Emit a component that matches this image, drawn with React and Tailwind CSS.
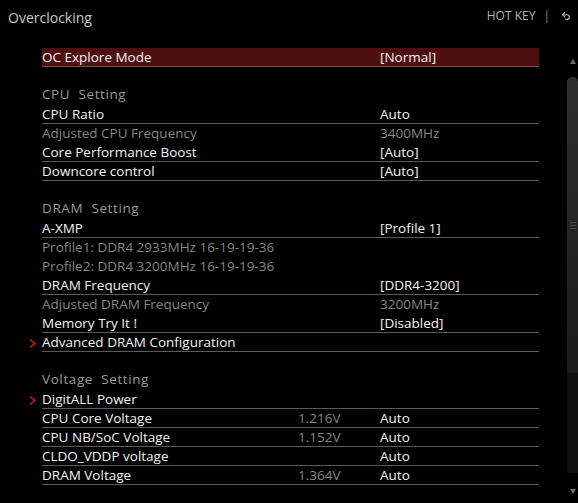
import React from "react"

const rows = [
  { label: "OC Explore Mode", value: "[Normal]", line: true, active: true },
  { blank: true },
  { header: "CPU  Setting" },
  { label: "CPU Ratio", value: "Auto", line: true },
  { label: "Adjusted CPU Frequency", value: "3400MHz", dim: true },
  { label: "Core Performance Boost", value: "[Auto]", line: true },
  { label: "Downcore control", value: "[Auto]", line: true },
  { blank: true },
  { header: "DRAM  Setting" },
  { label: "A-XMP", value: "[Profile 1]", line: true },
  { label: "Profile1: DDR4 2933MHz 16-19-19-36", dim: true },
  { label: "Profile2: DDR4 3200MHz 16-19-19-36", dim: true },
  { label: "DRAM Frequency", value: "[DDR4-3200]", line: true },
  { label: "Adjusted DRAM Frequency", value: "3200MHz", dim: true },
  { label: "Memory Try It !", value: "[Disabled]", line: true },
  { label: "Advanced DRAM Configuration", line: true, sub: true },
  { blank: true },
  { header: "Voltage  Setting" },
  { label: "DigitALL Power", line: true, sub: true },
  { label: "CPU Core Voltage", now: "1.216V", value: "Auto", line: true },
  { label: "CPU NB/SoC Voltage", now: "1.152V", value: "Auto", line: true },
  { label: "CLDO_VDDP voltage", value: "Auto", line: true },
  { label: "DRAM Voltage", now: "1.364V", value: "Auto", line: true }
]

function Chevron() {
  return (
    <svg width="8" height="11" viewBox="0 0 8 11">
      <polyline points="1,1.5 6,5.5 1,9.5" fill="none" stroke="#e01c1c" strokeWidth="1.4" />
    </svg>
  )
}

function Row({ r }) {
  if (r.blank) return <div className="h-[19px]" />

  if (r.header)
    return (
      <div className="h-[19px] flex items-center pl-[18px] pb-[1px] text-[#9a9a9a] tracking-[0.6px] whitespace-pre">
        {r.header}
      </div>
    )

  return (
    <div className="h-[19px] flex">
      <div className="w-[18px] flex items-center pl-[5px] pt-[1px]">
        {r.sub && <Chevron />}
      </div>
      <div
        className={`flex-1 flex items-center pt-[2px] border-b ${
          r.line ? "border-[#5a5a5a]" : "border-transparent"
        } ${r.active ? "bg-[#4d0f10]" : ""}`}
      >
        <div className={`w-[256px] whitespace-nowrap ${r.dim ? "text-[#858585]" : "text-[#f2f2f2]"}`}>
          {r.label}
        </div>
        <div className="w-[82px] text-[#858585]">{r.now}</div>
        <div className={r.dim ? "text-[#858585]" : "text-[#f2f2f2]"}>{r.value}</div>
      </div>
    </div>
  )
}

export default function App() {
  return (
    <div
      className="w-[578px] h-[503px] bg-black overflow-hidden text-[13.5px] leading-none"
      style={{ fontFamily: '"Open Sans", sans-serif' }}
    >
      {/* Top bar */}
      <div className="h-[48px] flex items-start justify-between">
        <div className="pl-[8px] pt-[11px] text-[14px] text-[#c8c8c8]">Overclocking</div>
        <div className="flex items-center pt-[10px] pr-[7px] text-[12px] text-[#b4b4b4]">
          <span>HOT KEY</span>
          <span className="ml-[8px] text-[#8a8a8a]">|</span>
          <svg className="ml-[11px]" width="10" height="10" viewBox="0 0 24 24" fill="none" stroke="#b4b4b4" strokeWidth="2.8" strokeLinecap="round" strokeLinejoin="round">
            <path d="M9 14 4 9l5-5" />
            <path d="M4 9h10.5a5.5 5.5 0 0 1 5.5 5.5a5.5 5.5 0 0 1-5.5 5.5H11" />
          </svg>
        </div>
      </div>

      <div className="flex">
        {/* Settings list */}
        <div className="pl-[24px] w-[539px]">
          {rows.map((r, i) => (
            <Row key={i} r={r} />
          ))}
        </div>

        <div className="flex-1" />

        {/* Scrollbar */}
        <div className="w-[11px] flex flex-col items-center">
          <div className="mt-[11px] w-0 h-0 border-l-[3px] border-r-[3px] border-b-[5px] border-l-transparent border-r-transparent border-b-[#6a6a6a]" />
          <div className="mt-[13px] w-[11px] h-[296px] rounded-t-[5px] bg-gradient-to-b from-[#2e2e2e] to-[#1b1b1b] flex flex-col items-center justify-center gap-[2px]">
            <div className="w-[6px] h-px bg-[#4a4a4a]" />
            <div className="w-[6px] h-px bg-[#4a4a4a]" />
            <div className="w-[6px] h-px bg-[#4a4a4a]" />
          </div>
          <div className="w-[11px] h-[100px] bg-[#101010]" />
          <div className="mt-[16px] w-0 h-0 border-l-[3px] border-r-[3px] border-t-[5px] border-l-transparent border-r-transparent border-t-[#6a6a6a]" />
        </div>
      </div>
    </div>
  )
}
